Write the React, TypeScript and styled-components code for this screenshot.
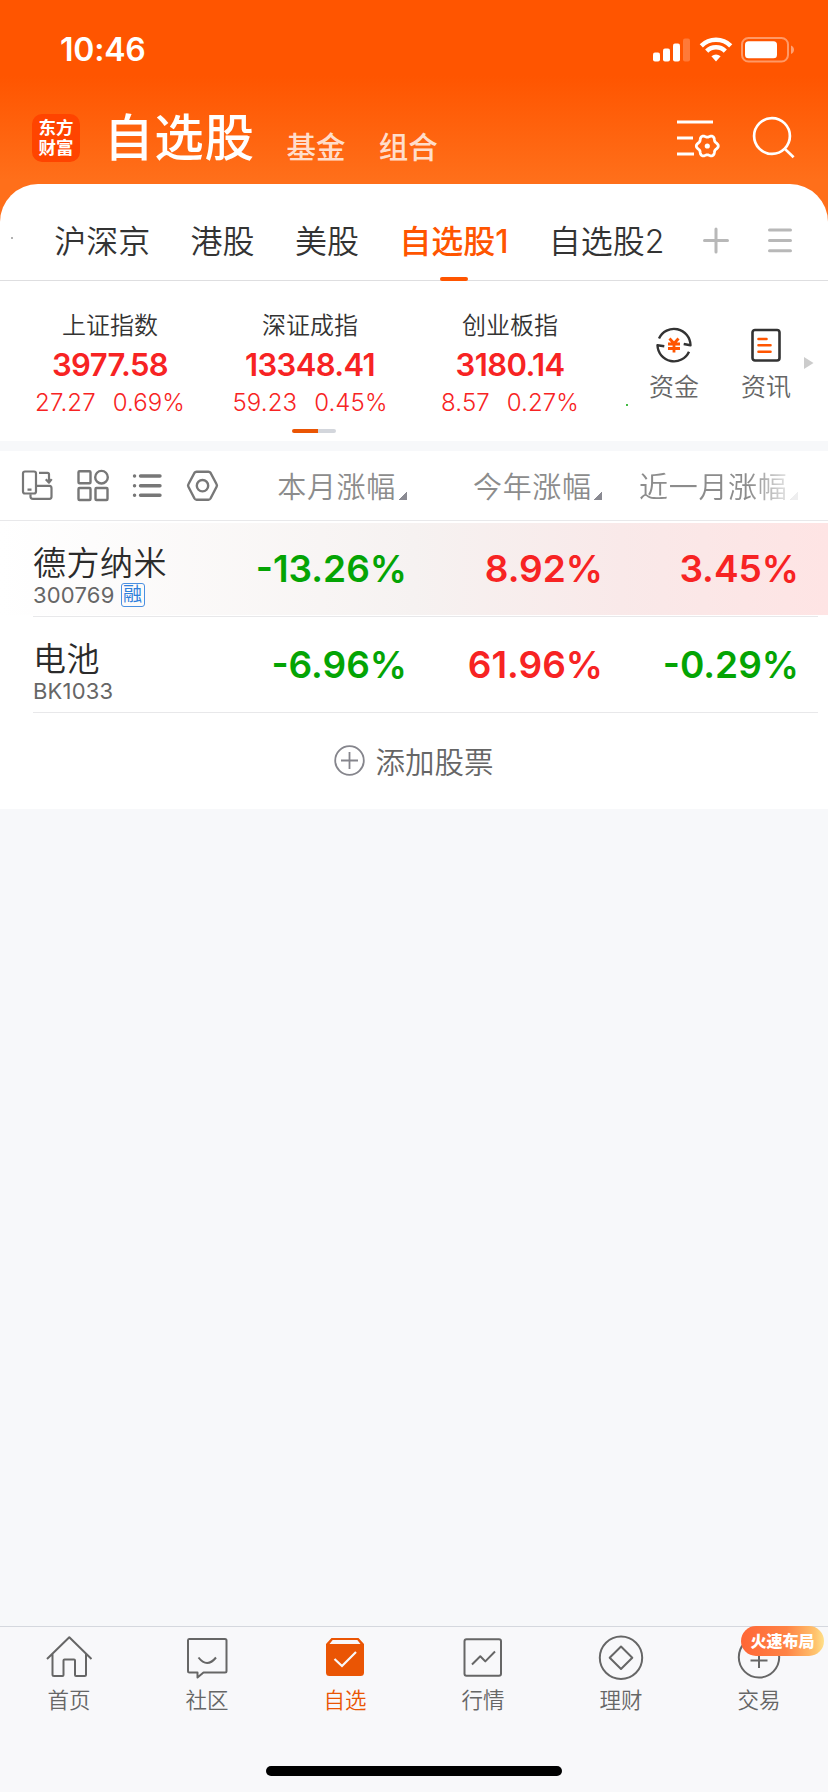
import React from "react";
import styled, { createGlobalStyle } from "styled-components";

const Global = createGlobalStyle`
  * { box-sizing: border-box; }
  body {
    margin: 0;
    background: #f7f8fa;
    color: #333;
    font-family: Inter, "Noto Sans CJK SC", sans-serif;
  }
  svg { display: block; flex: none; overflow: visible; }
`;

const RED = "#f72323";
const GREEN = "#04a404";
const ORANGE = "#ff5500";

const Screen = styled.div`
  width: 828px;
  height: 1792px;
  display: flex;
  flex-direction: column;
  background: #f7f8fa;
  overflow: hidden;
`;

const Header = styled.header`
  height: 228px;
  margin-bottom: -44px;
  flex: none;
  background: linear-gradient(#ff5500 0, #ff5500 76px, #ff6f1a 180px);
  color: #fff;
`;

const StatusBar = styled.div`
  height: 99px;
  padding: 0 33px 0 60px;
  display: flex;
  justify-content: space-between;
  align-items: center;
`;

const Clock = styled.span`
  font-size: 32px;
  font-weight: 600;
  line-height: 40px;
  letter-spacing: -0.2px;
`;

const StatusIcons = styled.div`
  display: flex;
  align-items: center;
  gap: 8.5px;
`;

const NavBar = styled.div`
  height: 85px;
  padding: 0 33px 0 32px;
  display: flex;
  align-items: flex-start;
`;

const Logo = styled.div`
  width: 48px;
  height: 48px;
  margin-top: 15px;
  padding-top: 4px;
  border-radius: 10px;
  background: #ff4400;
  font-size: 17.5px;
  font-weight: 700;
  line-height: 20px;
  text-align: center;
`;

const NavTitle = styled.h1`
  margin: 12px 0 0 24px;
  font-size: 49.5px;
  font-weight: 500;
  line-height: 54px;
  letter-spacing: 0.7px;
`;

const NavLink = styled.span<{ $gap: number }>`
  margin: 28px 0 0 ${(p) => p.$gap}px;
  font-size: 29.5px;
  font-weight: 500;
  line-height: 40px;
  color: rgba(255, 255, 255, 0.8);
`;

const NavActions = styled.div`
  margin: 17px 0 0 auto;
  display: flex;
  gap: 33px;
`;

const Panel = styled.main`
  flex: none;
  height: 625px;
  background: #fff;
  border-radius: 38px 38px 0 0;
`;

const Tabs = styled.nav`
  height: 97px;
  padding: 18px 36px 0 11px;
  display: flex;
  align-items: flex-start;
  border-bottom: 1px solid #dedee0;
`;

const Speck = styled.i<{ $color: string }>`
  width: 2px;
  height: 2px;
  border-radius: 1px;
  flex: none;
  background: ${(p) => p.$color};
`;

const TabSpeck = styled(Speck)`
  margin: 35px 1px 0 0;
`;

const Tab = styled.span<{ $active?: boolean }>`
  height: 79px;
  margin-left: 40.3px;
  display: flex;
  flex-direction: column;
  align-items: center;
  justify-content: space-between;
  font-size: 32px;
  font-weight: ${(p) => (p.$active ? 500 : 350)};
  line-height: 80px;
  white-space: nowrap;
  color: ${(p) => (p.$active ? ORANGE : "#333")};
`;

const TabLabel = styled.span`
  height: 75px;
`;

const TabMark = styled.i`
  width: 28px;
  height: 4px;
  border-radius: 2px;
  background: ${ORANGE};
`;

const TabActions = styled.div`
  margin: 25px 0 0 auto;
  display: flex;
  gap: 39px;
`;

const Summary = styled.section`
  height: 160px;
  display: flex;
`;

const Indices = styled.div`
  width: 628px;
  display: flex;
  flex-wrap: wrap;
  padding-left: 10px;
  align-content: flex-start;
`;

const IndexCard = styled.div`
  width: 200px;
  height: 148px;
  padding-top: 29px;
  display: flex;
  flex-direction: column;
  align-items: center;
  color: ${RED};
`;

const IndexName = styled.span`
  font-size: 24px;
  font-weight: 350;
  line-height: 32px;
  color: #333;
`;

const IndexValue = styled.span`
  font-size: 31px;
  font-weight: 600;
  line-height: 46px;
  letter-spacing: -0.6px;
`;

const IndexChange = styled.span`
  display: flex;
  gap: 17px;
  font-size: 24px;
  font-weight: 300;
  line-height: 30px;
  letter-spacing: 0.1px;
`;

const IndexSpeck = styled(Speck)`
  margin: 123px 0 0 16px;
`;

const Pager = styled.div`
  width: 44px;
  height: 4px;
  margin-left: 282px;
  border-radius: 2px;
  background: linear-gradient(90deg, #ea5504 26px, #d3d6dc 26px);
`;

const Shortcuts = styled.div`
  display: flex;
  padding: 46px 0 0 21px;
  gap: 42px;
`;

const Shortcut = styled.div`
  display: flex;
  flex-direction: column;
  align-items: center;
  gap: 8px;
  font-size: 25px;
  font-weight: 350;
  line-height: 32px;
  color: #666;
`;

const More = styled.div`
  margin: 30px 0 0 -29px;
`;

const Divider = styled.div`
  height: 10px;
  background: #f7f8fa;
`;

const TableHead = styled.div`
  height: 70px;
  padding: 0 30px 0 20px;
  display: flex;
  align-items: center;
  border-bottom: 1px solid #e8e8ea;
`;

const Tools = styled.div`
  width: 200px;
  padding-top: 1px;
  display: flex;
  align-items: center;
  gap: 22.5px;
  color: #777;
`;

const ColumnHead = styled.div<{ $width: number; $fade?: boolean }>`
  width: ${(p) => p.$width}px;
  height: 44px;
  padding-top: 4px;
  display: flex;
  justify-content: flex-end;
  align-items: flex-end;
  gap: 2.5px;
  font-size: 29px;
  font-weight: 350;
  line-height: 40px;
  letter-spacing: 0.7px;
  white-space: nowrap;
  color: #8c8c8c;
  ${(p) => p.$fade && "mask-image: linear-gradient(90deg, #000 75%, rgba(0,0,0,0.15) 97%);"}
`;

const SortMark = styled.i`
  width: 8px;
  height: 8px;
  margin-bottom: 8px;
  background: linear-gradient(135deg, transparent 50%, #8a8a92 50%);
`;

const Row = styled.div<{ $hot?: boolean }>`
  height: 96px;
  padding: 2px 10px 1px 0;
  background: ${(p) =>
    p.$hot ? "linear-gradient(90deg, #fff, #f6f2f1 50%, #f9e9e9 75%, #fee4e4)" : "none"};
  background-size: 100% 92px;
  background-position: 0 2px;
  background-repeat: no-repeat;
`;

const RowBody = styled.div`
  height: 94px;
  margin-left: 33px;
  display: flex;
  border-bottom: 1px solid #e8e8ea;
`;

const Stock = styled.div`
  width: 178px;
  flex: none;
  padding-top: 19px;
`;

const StockName = styled.div`
  font-size: 33px;
  font-weight: 350;
  line-height: 42px;
  letter-spacing: 0.5px;
  white-space: nowrap;
  color: #2b2b2b;
`;

const StockCode = styled.div`
  display: flex;
  align-items: center;
  gap: 6px;
  height: 28px;
  margin-top: -3px;
  font-size: 22px;
  line-height: 24px;
  letter-spacing: 0.2px;
  color: #666;
`;

const Tag = styled.span`
  width: 24px;
  height: 24px;
  border: 1px solid #4a90e2;
  border-radius: 3px;
  font-size: 19px;
  line-height: 22px;
  text-align: center;
  letter-spacing: 0;
  color: #2f80dc;
`;

const Value = styled.span<{ $down?: boolean }>`
  width: 196px;
  flex: none;
  padding-top: 25px;
  font-size: 37px;
  font-weight: 600;
  line-height: 42px;
  text-align: right;
  color: ${(p) => (p.$down ? GREEN : RED)};
`;

const AddStock = styled.div`
  height: 96px;
  display: flex;
  justify-content: center;
  align-items: center;
  gap: 10px;
  padding-top: 2px;
  font-size: 29.5px;
  font-weight: 350;
  line-height: 40px;
  color: #666;
`;

const AddIcon = styled.svg`
  margin-top: 1px;
`;

const TabBar = styled.footer`
  height: 166px;
  flex: none;
  margin-top: auto;
  border-top: 1px solid #d5d8de;
  background: #f8f8fa;
  display: flex;
  flex-direction: column;
  justify-content: space-between;
  align-items: center;
  padding-bottom: 16px;
`;

const BarItems = styled.div`
  width: 828px;
  display: flex;
`;

const BarItem = styled.div<{ $active?: boolean }>`
  position: relative;
  width: 138px;
  padding-top: 8px;
  display: flex;
  flex-direction: column;
  align-items: center;
  gap: 4px;
  font-size: 21.5px;
  font-weight: 350;
  line-height: 30px;
  color: ${(p) => (p.$active ? "#ea5504" : "#666")};
`;

const Promo = styled.span`
  position: absolute;
  left: 51px;
  top: -1px;
  width: 83px;
  height: 30px;
  border-radius: 15px;
  background: linear-gradient(90deg, #ff6636, #ff8345 55%, #ffc46e 90%, #ffe08a);
  font-size: 16px;
  font-weight: 800;
  line-height: 31px;
  text-align: center;
  color: #fff;
`;

const HomeIndicator = styled.div`
  width: 296px;
  height: 10px;
  border-radius: 5px;
  background: #000;
`;

const line = (w: number) => ({
  fill: "none",
  stroke: "currentColor",
  strokeWidth: w,
  strokeLinejoin: "round" as const,
});

const Signal = () => (
  <svg width="37" height="24" fill="#fff">
    <rect x="0" y="14.500" width="7" height="9" rx="2" />
    <rect x="10" y="10.500" width="7" height="13" rx="2" />
    <rect x="20" y="5.500" width="7" height="18" rx="2" />
    <rect x="30" y="0.500" width="7" height="23" rx="2" opacity=".22" />
  </svg>
);

const Wifi = () => (
  <svg width="34" height="26" viewBox="0 0 34 26" fill="none" stroke="#fff" strokeWidth="4.500">
    <path d="M2.300 8.800a20.800 20.800 0 0 1 29.400 0" />
    <path d="M7.700 14.200a13.200 13.200 0 0 1 18.600 0" />
    <path d="M12.400 19.300Q17 15.800 21.600 19.300L17 24.600z" fill="#fff" stroke="none" />
  </svg>
);

const Battery = () => (
  <svg width="54" height="26" viewBox="0 0 54 26">
    <rect x="1" y="1" width="46" height="23.500" rx="6.500" fill="none" stroke="#fff" strokeWidth="2" opacity=".4" />
    <rect x="4" y="4.200" width="32" height="17" rx="3.500" fill="#fff" />
    <path d="M50 8.500c4 1.500 4 7 0 8.500z" fill="#fff" opacity=".45" />
  </svg>
);

const gear = Array.from({ length: 73 }, (_, i) => {
  const t = (i * Math.PI) / 36;
  const r = 9.9 + 1.1 * Math.cos(6 * t);
  return `${i ? "L" : "M"}${(30.3 + r * Math.cos(t)).toFixed(2)} ${(30 + r * Math.sin(t)).toFixed(2)}`;
}).join("");

const ListSettings = () => (
  <svg width="42" height="44" {...line(2.8)}>
    <path d="M0 6h36M0 22h16M0 38h17" />
    <path d={gear + "z"} />
    <circle cx="30.300" cy="30" r="2.600" fill="#fff" stroke="none" />
  </svg>
);

const Search = () => (
  <svg width="43" height="44" {...line(2.7)}>
    <circle cx="20" cy="20" r="17.900" />
    <path d="M32.600 32.600l9 8.700" />
  </svg>
);

const Funds = () => (
  <svg width="38" height="36" viewBox="0 0 38 36" {...line(2.4)}>
    <g stroke="#333">
      <path d="M4 11.500A16.500 16.500 0 0 1 35.500 18.300l-6.800-1.300" />
      <path d="M34 24.700A16.500 16.500 0 0 1 2.500 18.300l6.800 1" />
    </g>
    <path
      d="M14.500 11.500l4.500 5 4.500-5M13 17h12M13 21.500h12M19 16v9.500"
      stroke={ORANGE}
      strokeWidth="2.800"
    />
  </svg>
);

const News = () => (
  <svg width="30" height="36" viewBox="0 0 30 36" {...line(2.6)}>
    <rect x="1.500" y="3" width="27" height="30.500" rx="2.500" stroke="#333" />
    <path d="M7.500 12h8M7.500 18.300h12M7.500 24.700h12" stroke={ORANGE} strokeLinecap="round" />
  </svg>
);

const RotateDevice = () => (
  <svg width="34" height="32" viewBox="0 0 34 32" {...line(2.2)}>
    <rect x="3" y="1.500" width="13" height="22" rx="2" />
    <path d="M7.500 19.700h4M19 2.800h8.500q1.500 0 1.500 1.500v7.500M25.800 9.200l3.200 3.500 2.700-3.500M17 15.800h12.500q2 0 2 2.500v8.500q0 2-2 2H13q-2.500 0-2.500-2v-2.500" />
  </svg>
);

const Grid = () => (
  <svg width="32" height="32" viewBox="0 0 32 32" {...line(2.4)}>
    <rect x="1.500" y="1.200" width="12" height="12" rx="1" />
    <circle cx="24.500" cy="7.200" r="6.300" />
    <rect x="1.500" y="18" width="12" height="12" rx="1" />
    <rect x="18.500" y="18" width="12" height="12" rx="1" />
  </svg>
);

const ListIcon = () => (
  <svg width="32" height="32" viewBox="0 0 32 32" {...line(3.4)} strokeLinecap="round">
    <path d="M9.500 6h19.500M9.500 15.700h19.500M9.500 25.300h19.500M3.500 6h.1M3.500 15.700h.1M3.500 25.300h.1" />
  </svg>
);

const Hexagon = () => (
  <svg width="34" height="32" viewBox="0 0 34 32" {...line(2.4)}>
    <path d="M10.500 1.700h12q1.300 0 2 1l6.100 11.600q.7 1.200 0 2.400L24.500 28.500q-.7 1.200-2 1.200h-12q-1.300 0-2-1.200L2.400 16.700q-.7-1.200 0-2.400L8.500 2.700q.7-1 2-1z" />
    <circle cx="16.500" cy="15.700" r="5.700" />
  </svg>
);

const HomeIcon = () => (
  <svg width="46" height="46" viewBox="0 0 46 46" {...line(2)}>
    <path d="M1 24L23.300 2.300 45.500 24M6.500 19v20.500q0 1.500 1.500 1.500h8.500q1 0 1-1V25.500q0-1 1-1h9.500q1 0 1 1V40q0 1 1 1h8.500q1.500 0 1.500-1.500V19" />
  </svg>
);

const ChatIcon = () => (
  <svg width="46" height="46" viewBox="0 0 46 46" {...line(2)}>
    <path d="M5 4h36q1.500 0 1.500 1.500v30.500q0 1.500-1.500 1.500H19.500L13.500 42.500v-5H5.500q-1.500 0-1.500-1.500V5.500Q4 4 5 4zM14.500 22.500q8.500 11 17.500 0" />
  </svg>
);

const BoxIcon = () => (
  <svg width="46" height="46" viewBox="0 0 46 46">
    <path
      d="M9.500 3h27l5.500 6v28.500q0 3.500-3.500 3.500h-31q-3.500 0-3.500-3.500V9zM10.700 5L7.500 9h31l-3.200-4z"
      fill="#ea5504"
      fillRule="evenodd"
    />
    <path d="M12.500 24l7.500 7 14-14" fill="none" stroke="#f8f8fa" strokeWidth="2.200" />
  </svg>
);

const ChartIcon = () => (
  <svg width="46" height="46" viewBox="0 0 46 46" {...line(2)}>
    <rect x="4.500" y="4.200" width="36.500" height="36.500" rx="2" />
    <path d="M12 29.500l8.300-8.300 5 5.200L35 16.500" />
  </svg>
);

const WealthIcon = () => (
  <svg width="46" height="46" viewBox="0 0 46 46" {...line(2)}>
    <circle cx="23" cy="22.700" r="21.200" />
    <path d="M23 11.500L34.300 22.700 23 34 11.700 22.700z" />
  </svg>
);

const TradeIcon = () => (
  <svg width="46" height="46" viewBox="0 0 46 46" {...line(2)}>
    <circle cx="23" cy="22.300" r="20.200" />
    <path d="M14.500 25.500h17M23 17v16" />
  </svg>
);

const indices = [
  { name: "上证指数", value: "3977.58", diff: "27.27", pct: "0.69%" },
  { name: "深证成指", value: "13348.41", diff: "59.23", pct: "0.45%" },
  { name: "创业板指", value: "3180.14", diff: "8.57", pct: "0.27%" },
];

const stocks = [
  { name: "德方纳米", code: "300769", tag: "融", hot: true, values: ["-13.26%", "8.92%", "3.45%"] },
  { name: "电池", code: "BK1033", tag: "", hot: false, values: ["-6.96%", "61.96%", "-0.29%"] },
];

const tabs = ["沪深京", "港股", "美股", "自选股1", "自选股2"];

const barItems = [
  { label: "首页", icon: <HomeIcon /> },
  { label: "社区", icon: <ChatIcon /> },
  { label: "自选", icon: <BoxIcon />, active: true },
  { label: "行情", icon: <ChartIcon /> },
  { label: "理财", icon: <WealthIcon /> },
  { label: "交易", icon: <TradeIcon />, promo: "火速布局" },
];

export default function App() {
  return (
    <Screen>
      <Global />
      <Header>
        <StatusBar>
          <Clock>10:46</Clock>
          <StatusIcons>
            <Signal />
            <Wifi />
            <Battery />
          </StatusIcons>
        </StatusBar>
        <NavBar>
          <Logo>
            东方
            <br />
            财富
          </Logo>
          <NavTitle>自选股</NavTitle>
          <NavLink $gap={32}>基金</NavLink>
          <NavLink $gap={33}>组合</NavLink>
          <NavActions>
            <ListSettings />
            <Search />
          </NavActions>
        </NavBar>
      </Header>

      <Panel>
        <Tabs>
          <TabSpeck $color="#999" />
          {tabs.map((t) => (
            <Tab key={t} $active={t === "自选股1"}>
              <TabLabel>{t}</TabLabel>
              {t === "自选股1" && <TabMark />}
            </Tab>
          ))}
          <TabActions>
            <svg width="26" height="28" stroke="#b8b8b8" strokeWidth="3" strokeLinecap="round">
              <path d="M1.500 13.500h23M13 2v23" />
            </svg>
            <svg width="24" height="28" stroke="#b8b8b8" strokeWidth="3" strokeLinecap="round">
              <path d="M1.500 3h21M1.500 13.500h21M1.500 23.700h21" />
            </svg>
          </TabActions>
        </Tabs>

        <Summary>
          <Indices>
            {indices.map((i) => (
              <IndexCard key={i.name}>
                <IndexName>{i.name}</IndexName>
                <IndexValue>{i.value}</IndexValue>
                <IndexChange>
                  <span>{i.diff}</span>
                  <span>{i.pct}</span>
                </IndexChange>
              </IndexCard>
            ))}
            <IndexSpeck $color="#04a404" />
            <Pager />
          </Indices>
          <Shortcuts>
            <Shortcut>
              <Funds />
              资金
            </Shortcut>
            <Shortcut>
              <News />
              资讯
            </Shortcut>
            <More>
              <svg width="10" height="12">
                <path d="M0 0l9.500 6L0 12z" fill="#ccc" />
              </svg>
            </More>
          </Shortcuts>
        </Summary>
        <Divider />

        <TableHead>
          <Tools>
            <RotateDevice />
            <Grid />
            <ListIcon />
            <Hexagon />
          </Tools>
          <ColumnHead $width={187}>
            本月涨幅
            <SortMark />
          </ColumnHead>
          <ColumnHead $width={196}>
            今年涨幅
            <SortMark />
          </ColumnHead>
          <ColumnHead $width={196} $fade>
            近一月涨幅
            <SortMark />
          </ColumnHead>
        </TableHead>

        {stocks.map((s) => (
          <Row key={s.code} $hot={s.hot}>
            <RowBody>
              <Stock>
                <StockName>{s.name}</StockName>
                <StockCode>
                  {s.code}
                  {s.tag && <Tag>{s.tag}</Tag>}
                </StockCode>
              </Stock>
              {s.values.map((v) => (
                <Value key={v} $down={v.startsWith("-")}>
                  {v}
                </Value>
              ))}
            </RowBody>
          </Row>
        ))}

        <AddStock>
          <AddIcon width="31" height="36" {...line(1.8)} stroke="#85858c">
            <circle cx="15.500" cy="15.500" r="14.300" />
            <path d="M7 15.500h17M15.500 7v17" />
          </AddIcon>
          添加股票
        </AddStock>
      </Panel>

      <TabBar>
        <BarItems>
          {barItems.map((b) => (
            <BarItem key={b.label} $active={b.active}>
              {b.icon}
              <span>{b.label}</span>
              {b.promo && <Promo>{b.promo}</Promo>}
            </BarItem>
          ))}
        </BarItems>
        <HomeIndicator />
      </TabBar>
    </Screen>
  );
}
